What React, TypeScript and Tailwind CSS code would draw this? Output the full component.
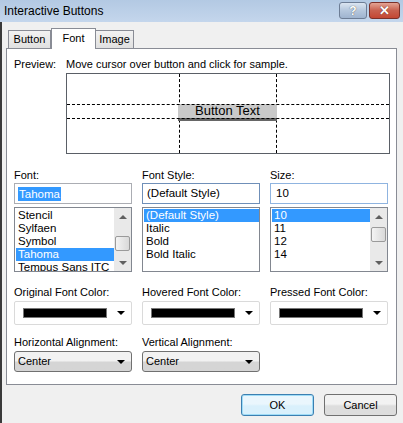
import React from 'react';

const font = { fontFamily: '"Liberation Sans", Arial, sans-serif' };

function ScrollBar({ thumbTop }: { thumbTop: number }) {
  return (
    <div className="relative flex h-full w-[17px] shrink-0 flex-col bg-[#e9e9e9]">
      <div className="flex h-[17px] items-center justify-center">
        <div className="h-0 w-0 border-x-[4px] border-b-[4px] border-x-transparent border-b-[#606060]" />
      </div>
      <div className="flex-1" />
      <div className="flex h-[17px] items-center justify-center">
        <div className="h-0 w-0 border-x-[4px] border-t-[4px] border-x-transparent border-t-[#606060]" />
      </div>
      <div
        className="absolute left-[1px] h-[15px] w-[15px] rounded-[2px] border border-[#9a9a9a] bg-gradient-to-r from-[#f4f4f4] to-[#d9d9d9]"
        style={{ top: thumbTop }}
      />
    </div>
  );
}

function ListBox({
  items,
  selected,
  scroll,
  thumbTop = 28,
}: {
  items: string[];
  selected: number;
  scroll?: boolean;
  thumbTop?: number;
}) {
  return (
    <div className="mt-[3px] flex h-[65px] w-[118px] border border-[#828790] bg-white">
      <div className="flex-1 overflow-hidden pl-[1px] pt-[1px]">
        {items.map((it, i) => (
          <div
            key={it}
            className={
              'h-[13px] pl-[2px] text-[11.5px] leading-[13px] whitespace-nowrap ' +
              (i === selected ? 'bg-[#3399ff] text-white' : 'text-black')
            }
          >
            {it}
          </div>
        ))}
      </div>
      {scroll && <ScrollBar thumbTop={thumbTop} />}
    </div>
  );
}

function Label({ children }: { children: React.ReactNode }) {
  return <div className="h-[16px] text-[11px] leading-[16px] text-black">{children}</div>;
}

function ColorCombo() {
  return (
    <div className="mt-[1px] flex h-[24px] w-[118px] items-center rounded-[2px] border border-[#dadada] bg-white">
      <div className="ml-[8px] h-[10px] w-[84px] border border-[#777] bg-black" />
      <div className="ml-auto mr-[6px] h-0 w-0 border-x-[4px] border-t-[4px] border-x-transparent border-t-black" />
    </div>
  );
}

function DropDown({ value }: { value: string }) {
  return (
    <div className="mt-[1px] flex h-[21px] w-[118px] items-center rounded-[3px] border border-[#707070] bg-gradient-to-b from-[#f2f2f2] from-45% to-[#d5d5d5] to-55% px-[3px]">
      <span className="text-[11px] text-black">{value}</span>
      <div className="ml-auto mr-[3px] h-0 w-0 border-x-[4px] border-t-[4px] border-x-transparent border-t-black" />
    </div>
  );
}

export default function App() {
  return (
    <div className="flex h-[423px] w-[403px] flex-col overflow-hidden bg-[#f0f0f0]" style={font}>
      {/* title bar */}
      <div className="flex h-[22px] items-center bg-gradient-to-b from-[#b3c9e3] to-[#c4d6ec] pl-[4px]">
        <span className="text-[12px] text-black">Interactive Buttons</span>
        <div className="ml-auto flex items-start self-start pt-[2px]">
          <div className="flex h-[17px] w-[28px] items-center justify-center rounded-[3px] border border-[#6d7d95] bg-gradient-to-b from-[#dbe5f1] via-[#b5c7dd] to-[#9fb4cf] text-[12px] font-bold text-white [text-shadow:0_0_1px_#333]">
            ?
          </div>
          <div className="ml-[2px] mr-[3px] flex h-[17px] w-[31px] items-center justify-center rounded-[3px] border border-[#7b302a] bg-gradient-to-b from-[#e3a394] via-[#c8604f] to-[#c34633] text-[13px] font-bold text-white [text-shadow:0_0_1px_#400]">
            ✕
          </div>
        </div>
      </div>

      <div className="flex flex-1 flex-col border-l-2 border-[#3a3a3a]">
        {/* tabs */}
        <div className="mt-[7px] flex h-[19px] items-end pl-[6px]">
          <div className="flex h-[18px] w-[43px] items-center justify-center border border-b-0 border-[#898c95] bg-gradient-to-b from-[#f2f2f2] to-[#e0e0e0] text-[11px]">
            Button
          </div>
          <div className="relative z-10 -mb-[1px] flex h-[21px] w-[45px] items-start justify-center border border-b-0 border-[#898c95] bg-white pt-[1px] text-[11px]">
            Font
          </div>
          <div className="flex h-[18px] w-[38px] items-center justify-center border border-b-0 border-l-0 border-[#898c95] bg-gradient-to-b from-[#f2f2f2] to-[#e0e0e0] text-[11px]">
            Image
          </div>
        </div>

        {/* panel */}
        <div className="ml-[4px] flex h-[337px] w-[391px] flex-col border border-[#898c95] bg-white pl-[7px] pt-[7px]">
          <div className="flex h-[16px] text-[11px] leading-[16px]">
            <span className="w-[52px]">Preview:</span>
            <span>Move cursor over button and click for sample.</span>
          </div>

          <div className="relative ml-[52px] mt-[1px] h-[81px] w-[324px] border border-[#5a5f66] bg-white">
            <div className="absolute left-[112px] top-0 h-full border-l border-dashed border-black" />
            <div className="absolute left-[209px] top-0 h-full border-l border-dashed border-black" />
            <div className="absolute left-[111px] top-[30px] flex h-[17px] w-[99px] flex-col bg-[#c9c9c9]">
              <div className="flex h-[14px] items-center justify-center text-[13px] leading-[14px] text-black">
                Button Text
              </div>
              <div className="h-[3px] bg-[#666]" />
            </div>
            <div className="absolute left-0 top-[30px] w-full border-t border-dashed border-black" />
            <div className="absolute left-0 top-[44px] w-full border-t border-dashed border-black" />
          </div>

          {/* font row */}
          <div className="mt-[13px] flex gap-[10px]">
            <div className="flex flex-col">
              <Label>Font:</Label>
              <div className="flex h-[21px] w-[118px] items-center border border-[#abadb3] bg-white px-[3px]">
                <span className="bg-[#3399ff] px-[1px] text-[11.5px] leading-[14px] text-white">Tahoma</span>
              </div>
              <ListBox
                items={['Stencil', 'Sylfaen', 'Symbol', 'Tahoma', 'Tempus Sans ITC']}
                selected={3}
                scroll
                thumbTop={28}
              />
            </div>
            <div className="flex flex-col">
              <Label>Font Style:</Label>
              <div className="flex h-[21px] w-[118px] items-center border border-[#6f8fb8] bg-white px-[4px]">
                <span className="text-[11.5px] text-black">(Default Style)</span>
              </div>
              <ListBox items={['(Default Style)', 'Italic', 'Bold', 'Bold Italic']} selected={0} />
            </div>
            <div className="flex flex-col">
              <Label>Size:</Label>
              <div className="flex h-[21px] w-[118px] items-center border border-[#8fb4e0] bg-white px-[5px]">
                <span className="text-[11.5px] text-black">10</span>
              </div>
              <ListBox items={['10', '11', '12', '14']} selected={0} scroll thumbTop={19} />
            </div>
          </div>

          {/* colour row */}
          <div className="mt-[12px] flex gap-[10px]">
            <div className="flex flex-col">
              <Label>Original Font Color:</Label>
              <ColorCombo />
            </div>
            <div className="flex flex-col">
              <Label>Hovered Font Color:</Label>
              <ColorCombo />
            </div>
            <div className="flex flex-col">
              <Label>Pressed Font Color:</Label>
              <ColorCombo />
            </div>
          </div>

          {/* alignment row */}
          <div className="mt-[9px] flex gap-[10px]">
            <div className="flex flex-col">
              <Label>Horizontal Alignment:</Label>
              <DropDown value="Center" />
            </div>
            <div className="flex flex-col">
              <Label>Vertical Alignment:</Label>
              <DropDown value="Center" />
            </div>
          </div>
        </div>

        {/* footer */}
        <div className="mt-[9px] flex justify-end gap-[10px] pr-[6px]">
          <button className="flex h-[22px] w-[73px] items-center justify-center rounded-[3px] border border-[#3c7fb1] bg-gradient-to-b from-[#eaf6fd] from-45% to-[#d9f0fc] to-55% text-[11px] text-black shadow-[inset_0_0_0_1px_#9fdcf7]">
            OK
          </button>
          <button className="flex h-[22px] w-[73px] items-center justify-center rounded-[3px] border border-[#707070] bg-gradient-to-b from-[#f2f2f2] from-45% to-[#dddddd] to-55% text-[11px] text-black">
            Cancel
          </button>
        </div>
      </div>
    </div>
  );
}
